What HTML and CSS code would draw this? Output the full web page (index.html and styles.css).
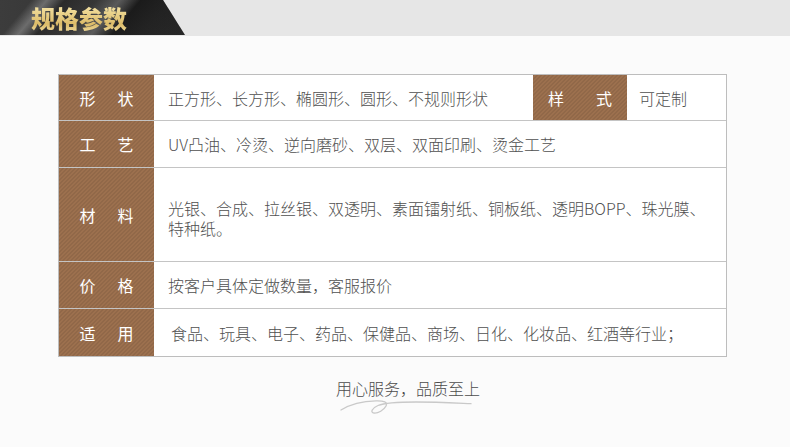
FILE: index.html
```html
<!DOCTYPE html>
<html lang="zh">
<head>
<meta charset="utf-8">
<title>规格参数</title>
<link rel="stylesheet" href="styles.css">
</head>
<body>
<header class="banner">
  <div class="banner-tab"><h1 class="banner-title">规格参数</h1></div>
</header>
<main class="content">
  <div class="spec">
    <div class="row row-first">
      <div class="label"><span>形</span><span>状</span></div>
      <div class="value grow">正方形、长方形、椭圆形、圆形、不规则形状</div>
      <div class="label label-alt"><span>样</span><span>式</span></div>
      <div class="value value-alt">可定制</div>
    </div>
    <div class="row row-h47">
      <div class="label"><span>工</span><span>艺</span></div>
      <div class="value grow">UV凸油、冷烫、逆向磨砂、双层、双面印刷、烫金工艺</div>
    </div>
    <div class="row row-h94">
      <div class="label"><span>材</span><span>料</span></div>
      <div class="value grow value-two">光银、合成、拉丝银、双透明、素面镭射纸、铜板纸、透明BOPP、珠光膜、<br>特种纸。</div>
    </div>
    <div class="row row-h47">
      <div class="label"><span>价</span><span>格</span></div>
      <div class="value grow">按客户具体定做数量，客服报价</div>
    </div>
    <div class="row row-h47">
      <div class="label"><span>适</span><span>用</span></div>
      <div class="value grow value-in">食品、玩具、电子、药品、保健品、商场、日化、化妆品、红酒等行业；</div>
    </div>
  </div>
  <footer class="slogan">
    <p class="slogan-text">用心服务，品质至上</p>
    <svg class="flourish" width="132" height="14" viewBox="0 0 132 14" aria-hidden="true">
      <path d="M1 10C12 3 24 1 36 0.8C44 0.6 48 2 46 6C44 10 38 13.5 34 13C30 12.5 32 8 38 5.5C44 3 56 2 76 2C96 2 116 3 131 3.6" fill="none" stroke="#c9c9c9" stroke-width="1.3" stroke-linecap="round"/>
    </svg>
  </footer>
</main>
</body>
</html>
```
FILE: styles.css
```css
* { box-sizing: border-box; }
html, body { margin: 0; padding: 0; }
body {
  width: 790px;
  height: 447px;
  overflow: hidden;
  background: #fbfbfb;
  font-family: "Noto Sans CJK SC", "Liberation Sans", sans-serif;
  color: #505050;
  font-weight: 300;
}
.banner {
  height: 36px;
  background: #e6e6e6;
}
.banner-tab {
  width: 185px;
  height: 35px;
  padding-left: 31px;
  display: flex;
  align-items: center;
  clip-path: polygon(0 0, 163px 0, 185px 100%, 0 100%);
  background:
    linear-gradient(130deg, transparent 0 24px, rgba(150,150,150,.55) 36px, rgba(30,30,30,.5) 50px, rgba(60,60,60,.2) 74px, rgba(130,130,130,.5) 92px, rgba(20,20,20,.75) 108px, rgba(20,20,20,.4) 130px, transparent 165px),
    linear-gradient(90deg, #3c3c3c, #333 60%, #272727);
}
.banner-title {
  margin: 0;
  font-size: 24px;
  line-height: 30px;
  font-weight: 900;
  background: linear-gradient(180deg, #f8e9ae, #dcbb68 70%, #f0dda0);
  -webkit-background-clip: text;
  background-clip: text;
  color: transparent;
}
.content {
  padding: 38px 63px 0 58px;
}
.spec {
  border: 1px solid #bdbdbd;
  background: #fff;
  font-size: 16px;
  line-height: 20px;
}
.row {
  display: flex;
  border-bottom: 1px solid #c4c4c4;
}
.row:last-child { border-bottom: 0; }
.row-first { height: 46px; }
.row-h47 { height: 47px; }
.row-h94 { height: 94px; }
.label {
  flex: none;
  width: 95px;
  display: flex;
  justify-content: center;
  align-items: center;
  gap: 22px;
  color: #fff;
  font-weight: 400;
  background:
    repeating-linear-gradient(135deg, rgba(0,0,0,.07) 0 1.414px, transparent 1.414px 2.828px),
    #9c704e;
}
.label-alt { width: 94px; gap: 32px; }
.value {
  display: flex;
  align-items: center;
  padding-left: 12px;
}
.value.grow { flex: 1; display: block; align-self: center; padding-left: 14px; }
.value-two.grow { padding-top: 7px; }
.value-in.grow { padding-left: 17px; }
.value-alt { width: 99px; }
.slogan {
  margin: 22px 0 0 31px;
  display: flex;
  flex-direction: column;
  align-items: center;
}
.slogan-text {
  margin: 0;
  font-size: 16px;
  line-height: 19px;
  color: #4c4c4c;
}
.flourish { margin-top: 2px; margin-left: -5px; }
```
